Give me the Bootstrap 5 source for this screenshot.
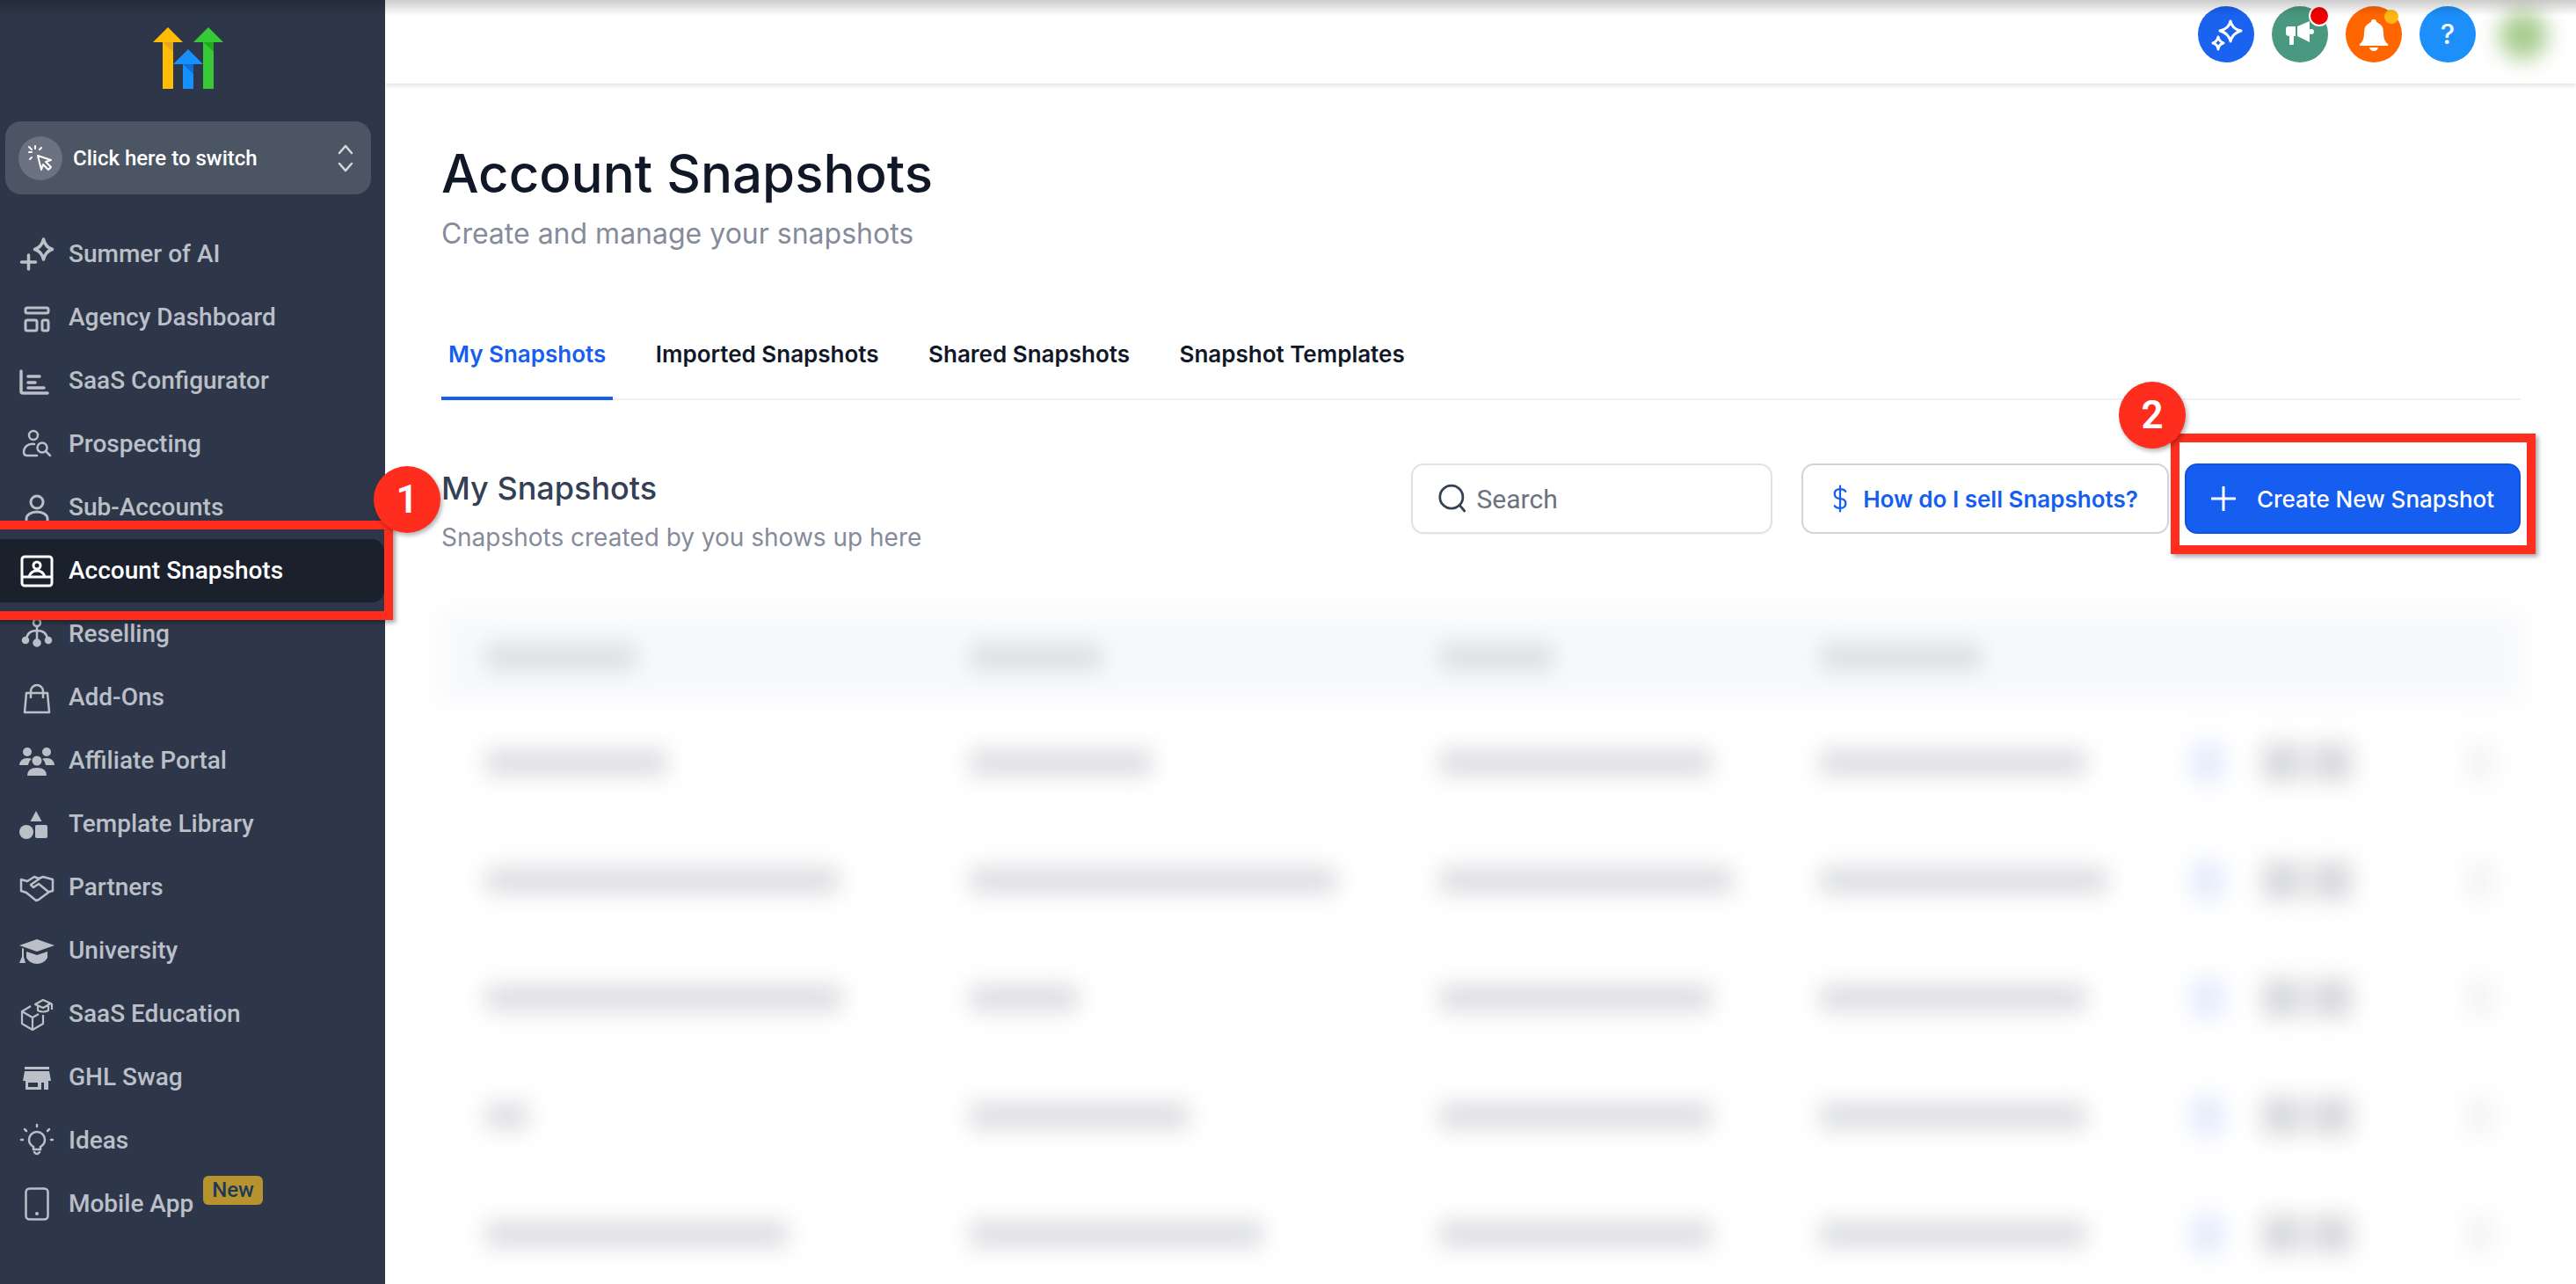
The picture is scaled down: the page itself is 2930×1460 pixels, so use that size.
<!DOCTYPE html>
<html>
<head>
  <title>Account Snapshots</title>
  <link rel="stylesheet" href="https://cdn.jsdelivr.net/npm/bootstrap@5.3.0/dist/css/bootstrap.min.css">
  <style>
    html, body { height: 100%; overflow: hidden; background: #fff; font-family: Inter, "Liberation Sans", sans-serif; }
    .app-shell { height: 1460px; }
    .top-shade { position: fixed; top: 0; left: 0; right: 0; height: 18px; background: linear-gradient(rgba(0,0,0,.2), rgba(0,0,0,0)); z-index: 5; pointer-events: none; }

    .side { width: 438px; flex: none; background: #2e3749; font-family: Roboto, sans-serif; }
    .side-logo { padding: 30px 0 0 174px; height: 138px; }
    .switcher { margin: 0 16px 0 6px; height: 83px; background: #4b5563; border-radius: 18px; padding: 0 20px 0 15px; color: #fff; font-size: 24px; font-weight: 500; }
    .switcher-dot { width: 50px; height: 50px; border-radius: 50%; background: #6b7280; flex: none; margin-right: 12px; }
    .side-list { margin-top: 32px; }
    .side-link { height: 72px; padding: 0 0 0 22px; gap: 16px; color: #bbbfc8; font-size: 28px; font-weight: 500; text-decoration: none; }
    .side-link:hover { color: #bbbfc8; }
    .side-link svg { width: 40px; height: 40px; flex: none; }
    .side-link.is-active { background: #1a202c; color: #fff; border-radius: 0 14px 14px 0; margin-right: 1px; }
    .new-tag { align-self: flex-start; margin: 4px 0 0 -5px; background: #b79330; color: #1c3a57; border-radius: 6px; font-size: 24px; line-height: 33px; padding: 0 10px; font-weight: 500; }

    .topbar { height: 95px; padding-right: 114px; gap: 20px; box-shadow: 0 2px 6px rgba(0,0,0,.14); }
    .round-ico { width: 64px; height: 64px; border-radius: 50%; color: #fff; margin-top: -17px; }
    .round-ico svg { width: 40px; height: 40px; }
    .round-ai { background: #1a62f0; }
    .round-news { background: #4a9880; }
    .round-bell { background: #ff6600; }
    .round-help { background: #1c8ffa; font-size: 31px; font-weight: 500; }
    .ico-dot { position: absolute; border-radius: 50%; z-index: 4; }
    .ico-dot-red { width: 24px; height: 24px; left: 2626px; top: 6px; background: #f00000; border: 2px solid #fff; }
    .ico-dot-amber { width: 16px; height: 16px; left: 2712px; top: 11px; background: #fdb813; }
    .avatar-blur { position: absolute; top: 12px; right: 32px; width: 56px; height: 56px; border-radius: 50%; background: #a9cc90; filter: blur(12px); }

    .page-body { padding: 0 63px 0 64px; }
    .page-title { font-size: 60px; font-weight: 500; color: #101828; margin: 66px 0 0; line-height: 72px; }
    .page-sub { font-size: 32px; color: #858b9b; margin: 12px 0 0; line-height: 42px; }

    .snap-tabs { margin-top: 82px; border-bottom: 2px solid #eeeff3; height: 86px; gap: 40.5px; }
    .snap-tabs .nav-link { padding: 14px 8px 0; height: 86px; font-size: 26px; font-weight: 600; color: #101828; }
    .snap-tabs .nav-link.active { color: #155eef; border-bottom: 4px solid #155eef; }

    .sec-row { margin-top: 72px; }
    .sec-title { font-size: 36px; font-weight: 500; color: #344054; margin: 6px 0 0; line-height: 44px; }
    .sec-sub { font-size: 28px; color: #858b9b; margin: 16px 0 0; line-height: 36px; }
    .search-box { width: 411px; height: 80px; border: 2px solid #e0e2e8; border-radius: 14px; padding-left: 28px; gap: 11px; box-shadow: 0 1px 2px rgba(16,24,40,.05); }
    .search-box input { border: 0; padding: 0; box-shadow: none !important; font-family: Roboto, sans-serif; font-size: 30px; color: #667085; }
    .search-box input::placeholder { color: #6b7280; }
    .how-btn { width: 418px; height: 80px; margin-left: 33px; border: 2px solid #d0d5dd; border-radius: 14px; background: #fff; color: #155eef; font-size: 26px; font-weight: 600; gap: 17px; }
    .how-btn:hover { background: #fff; color: #155eef; border-color: #d0d5dd; }
    .make-btn { width: 382px; height: 80px; margin-left: 18px; background: #155eef; border: 2px solid #0f54e0; border-radius: 14px; font-size: 26px; font-weight: 500; gap: 24px; }

    /* the table is blurred in the picture, so its cells are plain bars */
    .blur-wrap { margin: 65px -2px 0 -2px; filter: blur(13px); }
    .blur-table { table-layout: fixed; width: 100%; margin: 0; }
    .blur-table th, .blur-table td { height: 134px; padding: 0 0 0 52px; border: 0; vertical-align: middle; background: transparent; box-shadow: none; }
    .blur-table th { height: 106px; background: #f8f9fb; }
    .blur-table td:nth-child(n+2), .blur-table th:nth-child(n+2) { padding-left: 0; }
    .col-a { width: 603px; } .col-b { width: 534px; } .col-c { width: 433px; } .col-d { width: 423px; } .col-e { width: 80px; } .col-f { width: 296px; }
    .blob { display: block; height: 30px; background: #dcdde1; }
    .blob-blue { width: 36px; height: 44px; background: #e3eafc; }
    .blob-grey { width: 46px; height: 44px; background: #d8d9dc; margin-right: 10px; }
    .blob-soft { width: 30px; height: 44px; margin-left: 121px; background: #f3f3f3; }

    .mark-box { position: absolute; border: 10px solid #fe2d1e; box-shadow: 3px 3px 5px rgba(0,0,0,.35); z-index: 6; }
    .mark-one { left: -10px; top: 592px; width: 457px; height: 113px; }
    .mark-two { left: 2469px; top: 493px; width: 415px; height: 137px; }
    .mark-num { position: absolute; width: 76px; height: 76px; border-radius: 50%; background: #fe2d1e; color: #fff; font-size: 44px; font-weight: 600; box-shadow: 2px 3px 5px rgba(0,0,0,.3); z-index: 7; font-family: Roboto, sans-serif; }
    .num-one { left: 425px; top: 530px; }
    .num-two { left: 2410px; top: 434px; }
  </style>
</head>
<body>
<div class="top-shade"></div>
<div class="app-shell d-flex position-relative">

  <aside class="side">
    <div class="side-logo">
      <svg width="80" height="72" viewBox="0 0 80 72">
        <path fill="#ffbc05" d="M11 18H0L17 1l17 17H23v53H11z"/><path fill="#e5a51c" d="M11 18h12v11z"/>
        <path fill="#168fff" d="M34 71V43H23l17-17 17 17H46v28z"/><path fill="#0f6ed2" d="M34 43h12v11z"/>
        <path fill="#37ca37" d="M57 18H46L63 1l17 17H69v53H57z"/><path fill="#22ab22" d="M57 18h12v11z"/>
      </svg>
    </div>
    <div class="switcher d-flex align-items-center">
      <span class="switcher-dot d-flex align-items-center justify-content-center">
        <svg width="30" height="30" viewBox="0 0 30 30" fill="none" stroke="#fff" stroke-width="2" stroke-linecap="round" stroke-linejoin="round"><path d="M12 12l15 5-6 2 6 6-3 3-6-6-2 6z"/><path d="M9 1v3M16 3l-2 2M2 8h3M3 16l2-2M2 2l3 3"/></svg>
      </span>
      <span class="flex-grow-1">Click here to switch</span>
      <svg width="18" height="36" viewBox="0 0 18 36" fill="none" stroke="#d6d8dd" stroke-width="2.500" stroke-linecap="round" stroke-linejoin="round"><path d="M2 12l7-8 7 8M2 24l7 8 7-8"/></svg>
    </div>

    <nav class="side-list nav flex-column">
      <a class="side-link nav-link d-flex align-items-center" href="#">
        <svg viewBox="0 0 40 40" fill="none" stroke="currentColor" stroke-width="3.500" stroke-linecap="round" stroke-linejoin="round"><path d="M27.500 3q2 9 10 11.500-8 2.500-10 11.500-2-9-10-11.500 8-2.500 10-11.500z"/><path d="M10.500 21v16M2.500 29h16"/></svg>
        Summer of AI</a>
      <a class="side-link nav-link d-flex align-items-center" href="#">
        <svg viewBox="0 0 40 40" fill="none" stroke="currentColor" stroke-width="3"><rect x="7" y="9" width="26" height="6" rx="2"/><rect x="7" y="23" width="13" height="12" rx="2"/><rect x="26" y="23" width="7" height="12" rx="2"/></svg>
        Agency Dashboard</a>
      <a class="side-link nav-link d-flex align-items-center" href="#">
        <svg viewBox="0 0 40 40" fill="none" stroke="currentColor" stroke-width="3.500" stroke-linecap="round"><path d="M2 9v23a2 2 0 0 0 2 2h28M10 15h13M10 22h8M10 28h18"/></svg>
        SaaS Configurator</a>
      <a class="side-link nav-link d-flex align-items-center" href="#">
        <svg viewBox="0 0 40 40" fill="none" stroke="currentColor" stroke-width="2.500" stroke-linecap="round"><circle cx="16" cy="10" r="5"/><path d="M17 20C9 19 5 24 5 29q0 4 4 4h11"/><circle cx="26" cy="24" r="5.500"/><path d="M30 28l5 5"/></svg>
        Prospecting</a>
      <a class="side-link nav-link d-flex align-items-center" href="#">
        <svg viewBox="0 0 40 40" fill="none" stroke="currentColor" stroke-width="3"><circle cx="20" cy="14" r="7"/><path d="M8 38v-5a12 8 0 0 1 24 0v5z"/></svg>
        Sub-Accounts</a>
      <a class="side-link nav-link d-flex align-items-center is-active" href="#">
        <svg viewBox="0 0 40 40" fill="none" stroke="currentColor" stroke-width="3" stroke-linejoin="round"><rect x="3" y="4" width="34" height="33" rx="3"/><path d="M3 27h34M11 27q2-7 9-7t9 7"/><circle cx="20" cy="14" r="4"/></svg>
        Account Snapshots</a>
      <a class="side-link nav-link d-flex align-items-center" href="#">
        <svg viewBox="0 0 40 40" fill="none" stroke="currentColor" stroke-width="2.500"><circle cx="20" cy="7" r="4"/><path d="M8 26q1-10 12-10t12 10M20 11v19"/><circle cx="7" cy="27" r="3" fill="currentColor"/><circle cx="20" cy="30" r="3.500" fill="currentColor"/><circle cx="33" cy="27" r="3" fill="currentColor"/></svg>
        Reselling</a>
      <a class="side-link nav-link d-flex align-items-center" href="#">
        <svg viewBox="0 0 40 40" fill="none" stroke="currentColor" stroke-width="2.500" stroke-linejoin="round"><path d="M8 15h24l2 22H6z"/><path d="M13 21V13a7 7 0 0 1 14 0v8"/></svg>
        Add-Ons</a>
      <a class="side-link nav-link d-flex align-items-center" href="#">
        <svg viewBox="0 0 40 40" fill="currentColor"><circle cx="9" cy="10" r="5"/><circle cx="31" cy="10" r="5"/><circle cx="20" cy="20" r="5.500"/><path d="M0 25q1-8 9-8 3 0 5 1-3 2-4 7zM40 25q-1-8-9-8-3 0-5 1 3 2 4 7zM9 37q0-9 11-9t11 9z"/></svg>
        Affiliate Portal</a>
      <a class="side-link nav-link d-flex align-items-center" href="#">
        <svg viewBox="0 0 40 40" fill="currentColor"><path d="M19 5l6.500 12h-13z"/><circle cx="8" cy="29" r="8"/><rect x="18" y="21" width="14" height="15" rx="2"/></svg>
        Template Library</a>
      <a class="side-link nav-link d-flex align-items-center" href="#">
        <svg viewBox="0 0 40 40" fill="none" stroke="currentColor" stroke-width="2.500" stroke-linejoin="round"><path d="M2 11l7 2 8-5 5 2 5-2 11 3v13l-4 1-12 9-3 1-11-9-6-2z"/><path d="M23 10l-10 7 3 3 6-4 11 9M9 13l-1 0"/></svg>
        Partners</a>
      <a class="side-link nav-link d-flex align-items-center" href="#">
        <svg viewBox="0 0 40 40" fill="currentColor"><path d="M20 7l20 7-20 7L0 14z"/><path d="M8 21l12 4 12-4v7q-4 7-12 7T8 28zM3 17l2 .8V27l2 7H0l3-7z"/></svg>
        University</a>
      <a class="side-link nav-link d-flex align-items-center" href="#">
        <svg viewBox="0 0 40 40" fill="none" stroke="currentColor" stroke-width="2.200" stroke-linejoin="round"><path d="M13 11l-10 6v14l12 7 12-7V21M3 17l12 7v14M15 24l7-4"/><path d="M18 9l9-5 9 4-9 5zM21 11v5q6 3 12 0V8M37 8v7"/></svg>
        SaaS Education</a>
      <a class="side-link nav-link d-flex align-items-center" href="#">
        <svg viewBox="0 0 40 40" fill="currentColor"><rect x="6" y="8" width="28" height="3"/><path d="M6 13h28l2 11H4z"/><path fill-rule="evenodd" d="M7 24h26v10h-5v-8h-3v8H7zM10 26v5h11v-5z"/></svg>
        GHL Swag</a>
      <a class="side-link nav-link d-flex align-items-center" href="#">
        <svg viewBox="0 0 40 40" fill="none" stroke="currentColor" stroke-width="2.500" stroke-linecap="round"><path d="M16 30v-3q-5-3-5-8a9 9 0 0 1 18 0q0 5-5 8v3z"/><path d="M17 33q3 4 6 0M20 2v2M6 7l2 2M34 7l-2 2M2 19h2M36 19h2"/></svg>
        Ideas</a>
      <a class="side-link nav-link d-flex align-items-center" href="#">
        <svg viewBox="0 0 40 40" fill="none" stroke="currentColor" stroke-width="2.500"><rect x="7.500" y="2.500" width="25" height="35" rx="4"/><circle cx="20" cy="31" r="2" fill="currentColor" stroke="none"/></svg>
        Mobile App <span class="new-tag">New</span></a>
    </nav>
  </aside>

  <main class="flex-grow-1 overflow-hidden">
    <header class="topbar d-flex align-items-center justify-content-end">
      <span class="round-ico round-ai d-flex align-items-center justify-content-center">
        <svg viewBox="0 0 40 40" fill="none" stroke="#fff" stroke-width="3" stroke-linejoin="round"><path d="M25 5q2 9 12 11-10 3-12 12-2-9-12-12 10-2 12-11z"/><path d="M11 23q1 5 6 7-5 1-6 7-1-6-6-7 5-2 6-7z"/></svg>
      </span>
      <span class="round-ico round-news d-flex align-items-center justify-content-center">
        <svg viewBox="0 0 40 40" fill="#fff"><path d="M4 14q0-3 3-3h8v11h-2v9q0 1-2 1H9q-1 0-1-1v-9q-4 0-4-3z"/><path d="M17 11l14-6v24l-14-7z"/><circle cx="33" cy="17" r="3"/></svg>
      </span>
      <span class="round-ico round-bell d-flex align-items-center justify-content-center">
        <svg viewBox="0 0 40 40" fill="#fff"><path d="M20 3q3 0 3 3 8 3 8 12 0 10 5 13 1 2-1 2H5q-2 0-1-2 5-3 5-13 0-9 8-12 0-3 3-3z"/><path d="M15 35h10q-1 4-5 4t-5-4z"/></svg>
      </span>
      <span class="round-ico round-help d-flex align-items-center justify-content-center">?</span>
    </header>
    <span class="ico-dot ico-dot-red"></span>
    <span class="ico-dot ico-dot-amber"></span>
    <div class="avatar-blur"></div>

    <div class="page-body">
      <h1 class="page-title">Account Snapshots</h1>
      <p class="page-sub">Create and manage your snapshots</p>

      <ul class="nav snap-tabs">
        <li class="nav-item"><a class="nav-link active" href="#">My Snapshots</a></li>
        <li class="nav-item"><a class="nav-link" href="#">Imported Snapshots</a></li>
        <li class="nav-item"><a class="nav-link" href="#">Shared Snapshots</a></li>
        <li class="nav-item"><a class="nav-link" href="#">Snapshot Templates</a></li>
      </ul>

      <div class="sec-row d-flex align-items-start">
        <div class="flex-grow-1">
          <h2 class="sec-title">My Snapshots</h2>
          <p class="sec-sub">Snapshots created by you shows up here</p>
        </div>
        <div class="search-box d-flex align-items-center">
          <svg width="38" height="40" viewBox="0 0 36 38" fill="none" stroke="#344054" stroke-width="3" stroke-linecap="round"><circle cx="17" cy="17" r="14"/><path d="M27 27l6 7"/></svg>
          <input class="form-control" type="text" placeholder="Search">
        </div>
        <button class="btn how-btn d-flex align-items-center justify-content-center" type="button">
          <svg width="18" height="32" viewBox="0 0 20 34" fill="none" stroke="#155eef" stroke-width="2.500" stroke-linecap="round"><path d="M10 1v32M17 8q-2-3-7-3-7 0-7 6t7 6 7 6-7 6q-5 0-7-3"/></svg>
          How do I sell Snapshots?
        </button>
        <button class="btn btn-primary make-btn d-flex align-items-center justify-content-center" type="button">
          <svg width="28" height="28" viewBox="0 0 28 28" stroke="#fff" stroke-width="3" stroke-linecap="round"><path d="M14 1v26M1 14h26"/></svg>
          Create New Snapshot
        </button>
      </div>

      <div class="blur-wrap" aria-hidden="true">
        <table class="table blur-table">
          <colgroup><col class="col-a"><col class="col-b"><col class="col-c"><col class="col-d"><col class="col-e"><col class="col-f"></colgroup>
          <thead>
            <tr><th><span class="blob" style="width:172px"></span></th><th><span class="blob" style="width:150px"></span></th><th><span class="blob" style="width:130px"></span></th><th><span class="blob" style="width:184px"></span></th><th></th><th></th></tr>
          </thead>
          <tbody>
            <tr><td><span class="blob" style="width:207px"></span></td><td><span class="blob" style="width:207px"></span></td><td><span class="blob" style="width:310px"></span></td><td><span class="blob" style="width:303px"></span></td><td><span class="blob blob-blue"></span></td><td><div class="d-flex"><span class="blob blob-grey"></span><span class="blob blob-grey"></span><span class="blob blob-soft"></span></div></td></tr>
            <tr><td><span class="blob" style="width:402px"></span></td><td><span class="blob" style="width:417px"></span></td><td><span class="blob" style="width:334px"></span></td><td><span class="blob" style="width:327px"></span></td><td><span class="blob blob-blue"></span></td><td><div class="d-flex"><span class="blob blob-grey"></span><span class="blob blob-grey"></span><span class="blob blob-soft"></span></div></td></tr>
            <tr><td><span class="blob" style="width:406px"></span></td><td><span class="blob" style="width:123px"></span></td><td><span class="blob" style="width:310px"></span></td><td><span class="blob" style="width:303px"></span></td><td><span class="blob blob-blue"></span></td><td><div class="d-flex"><span class="blob blob-grey"></span><span class="blob blob-grey"></span><span class="blob blob-soft"></span></div></td></tr>
            <tr><td><span class="blob" style="width:49px"></span></td><td><span class="blob" style="width:249px"></span></td><td><span class="blob" style="width:310px"></span></td><td><span class="blob" style="width:303px"></span></td><td><span class="blob blob-blue"></span></td><td><div class="d-flex"><span class="blob blob-grey"></span><span class="blob blob-grey"></span><span class="blob blob-soft"></span></div></td></tr>
            <tr><td><span class="blob" style="width:344px"></span></td><td><span class="blob" style="width:333px"></span></td><td><span class="blob" style="width:310px"></span></td><td><span class="blob" style="width:303px"></span></td><td><span class="blob blob-blue"></span></td><td><div class="d-flex"><span class="blob blob-grey"></span><span class="blob blob-grey"></span><span class="blob blob-soft"></span></div></td></tr>
          </tbody>
        </table>
      </div>
    </div>
  </main>

  <div class="mark-box mark-one"></div>
  <div class="mark-box mark-two"></div>
  <div class="mark-num num-one d-flex align-items-center justify-content-center">1</div>
  <div class="mark-num num-two d-flex align-items-center justify-content-center">2</div>
</div>
<script src="https://cdn.jsdelivr.net/npm/bootstrap@5.3.0/dist/js/bootstrap.bundle.min.js"></script>
</body>
</html>
